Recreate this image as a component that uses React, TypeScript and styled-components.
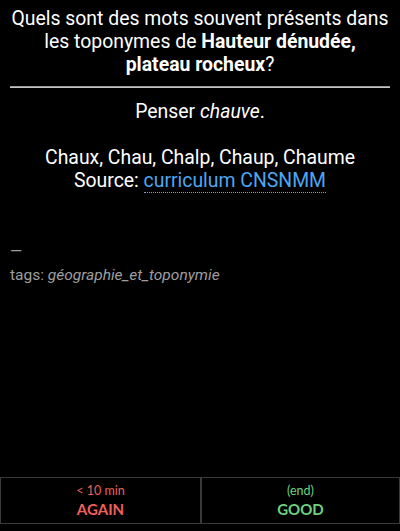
import React from "react";
import styled, { createGlobalStyle } from "styled-components";

const Global = createGlobalStyle`
  html, body { margin: 0; padding: 0; background: #000; }
  body { width: 400px; height: 531px; overflow: hidden; }
  #root { height: 531px; }
`;

const Screen = styled.div`
  height: 531px;
  display: flex;
  flex-direction: column;
  background: #000;
  color: #fff;
  font-family: Roboto, "Liberation Sans", sans-serif;
`;

const Card = styled.div`
  flex: 1;
  padding: 7px 10px 0;
  font-size: 19.4px;
  line-height: 23px;
`;

const Question = styled.div`
  text-align: center;
`;

const Rule = styled.hr`
  margin: 10px 0 12px;
  border: none;
  height: 2px;
  background: linear-gradient(#9a9a9a 0 1px, #c4c4c4 1px 2px);
`;

const Answer = styled.div`
  text-align: center;
`;

const Link = styled.a`
  color: #4ea6f2;
  text-decoration: none;
  border-bottom: 1px dotted #7aa0c8;
`;

const Tags = styled.div`
  margin-top: 47px;
  color: #9e9e9e;
  font-size: 15.5px;
  line-height: 24px;
`;

const ButtonBar = styled.div`
  display: grid;
  grid-template-columns: 1fr 1fr;
  margin-bottom: 7px;
  border: 1px solid #3a3a3a;
`;

const AnswerButton = styled.div<{ $color: string; $divider?: boolean }>`
  height: 45px;
  display: flex;
  flex-direction: column;
  align-items: center;
  justify-content: center;
  color: ${(p) => p.$color};
  font-family: Lato, "Open Sans", sans-serif;
  border-left: ${(p) => (p.$divider ? "2px solid #3a3a3a" : "none")};
`;

const Interval = styled.div`
  font-size: 12.5px;
  line-height: 16px;
`;

const Label = styled.div`
  font-size: 15px;
  font-weight: 700;
  line-height: 20px;
`;

export default function App() {
  return (
    <Screen>
      <Global />
      <Card>
        <Question>
          Quels sont des mots souvent présents dans les toponymes de{" "}
          <b>Hauteur dénudée, plateau rocheux</b>?
        </Question>
        <Rule />
        <Answer>
          Penser <i>chauve</i>.
          <br />
          <br />
          Chaux, Chau, Chalp, Chaup, Chaume
          <br />
          Source: <Link>curriculum CNSNMM</Link>
        </Answer>
        <Tags>
          —
          <br />
          tags: <i>géographie_et_toponymie</i>
        </Tags>
      </Card>
      <ButtonBar>
        <AnswerButton $color="#ef5f5c">
          <Interval>&lt; 10 min</Interval>
          <Label>AGAIN</Label>
        </AnswerButton>
        <AnswerButton $color="#6fd07c" $divider>
          <Interval>(end)</Interval>
          <Label>GOOD</Label>
        </AnswerButton>
      </ButtonBar>
    </Screen>
  );
}
